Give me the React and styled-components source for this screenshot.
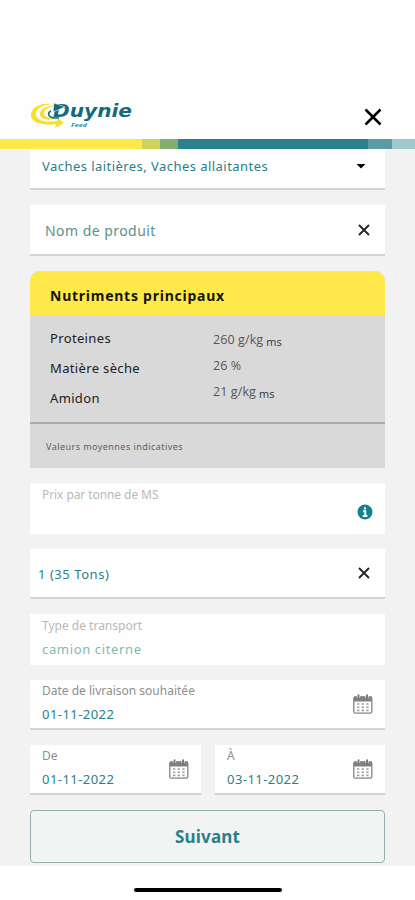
import React from "react"
import styled, {createGlobalStyle, ThemeProvider} from "styled-components"

const theme = {
  colors: {
    teal: "#2b7f8a",
    tealSoft: "#5d918f",
    tealPale: "#83b9b2",
    yellow: "#ffe94a",
    page: "#f2f2f2",
    panel: "#d9d9d9",
    line: "#d3d5d5",
    label: "#8f8f8f",
    labelPale: "#b9b9b9"
  },
  fontFamilies: {
    default: `"Noto Sans", "Open Sans", sans-serif`,
    values: `"Open Sans", sans-serif`
  }
}

const GlobalStyle = createGlobalStyle`
  * {
    box-sizing: border-box;
  }

  body {
    margin: 0;
    background: #fff;
  }
`

const Screen = styled.div`
  display: flex;
  flex-direction: column;
  width: 415px;
  height: 900px;
  overflow: hidden;
  background: #fefefe;
  font-family: ${props => props.theme.fontFamilies.default};
`

const Header = styled.header`
  display: flex;
  justify-content: space-between;
  height: 139px;
  padding: 98px 33px 0 28px;
`

const HeaderClose = styled.svg`
  width: 18px;
  height: 18px;
  margin-top: 10px;
`

const Stripes = styled.div`
  display: grid;
  grid-template-columns: 142px 18px 18px 190px 24px 1fr;
  flex: none;
  height: 10px;
`

const Stripe = styled.span`
  background: ${props => props.$color};
`

const Form = styled.main`
  display: flex;
  flex-direction: column;
  gap: 15px;
  flex: none;
  height: 717px;
  padding: 0 30px;
  background: ${props => props.theme.colors.page};
`

const FieldBox = styled.div`
  display: flex;
  justify-content: space-between;
  flex: none;
  width: 100%;
  height: ${props => props.$height || 50}px;
  padding: 0 12px 0 ${props => props.$indent || 12}px;
  background: #fefefe;
  border-bottom: ${props => (props.$line ? 2 : 0)}px solid ${props => props.theme.colors.line};
`

const FieldText = styled.div`
  padding-top: ${props => props.$top}px;
  white-space: nowrap;
`

const Label = styled.div`
  font-size: 12px;
  line-height: 16px;
  letter-spacing: ${props => props.$spacing || 0}px;
  color: ${props => (props.$pale ? props.theme.colors.labelPale : props.theme.colors.label)};
`

const Value = styled.div`
  margin-top: ${props => (props.$stacked ? 5 : 0)}px;
  font-size: ${props => props.$size || 13}px;
  line-height: 20px;
  letter-spacing: ${props => props.$spacing || 0.45}px;
  color: ${props => props.theme.colors[props.$tone || "teal"]};
`

const FieldIcon = styled.svg`
  flex: none;
  width: ${props => props.$size}px;
  height: ${props => props.$size}px;
  margin-top: ${props => props.$top}px;
  margin-right: ${props => props.$right || 0}px;
`

const Card = styled.section`
  flex: none;
  height: 197px;
  border-radius: 10px 10px 0 0;
  overflow: hidden;
  background: ${props => props.theme.colors.panel};
`

const CardTitle = styled.h2`
  height: 44px;
  margin: 0;
  padding-left: 20px;
  font-size: 14px;
  line-height: 50px;
  letter-spacing: 0.75px;
  color: #15150f;
  background: ${props => props.theme.colors.yellow};
`

const CardBody = styled.div`
  display: grid;
  grid-template-columns: 163px 1fr;
  height: 109px;
  padding-left: 20px;
  border-bottom: 2px solid #a9adad;
`

const NutrientNames = styled.div`
  padding-top: 8px;
  font-size: 13px;
  line-height: 30px;
  letter-spacing: 0.35px;
  color: #202020;
`

const NutrientValues = styled.div`
  padding-top: 12px;
  font-family: ${props => props.theme.fontFamilies.values};
  font-size: 12.5px;
  line-height: 26px;
  letter-spacing: 0.1px;
  color: #555;
`

const NutrientValue = styled.div`
  height: 26px;
`

const Unit = styled.span`
  position: relative;
  top: 2px;
  margin-left: 3px;
  font-size: 11px;
  color: #333;
`

const CardNote = styled.p`
  margin: 0;
  padding-left: 16px;
  font-size: 9px;
  line-height: 46px;
  letter-spacing: 0.45px;
  color: #606060;
`

const DateRow = styled.div`
  display: grid;
  grid-template-columns: 171px 170px;
  column-gap: 14px;
`

const NextButton = styled.button`
  flex: none;
  height: 53px;
  padding: 0;
  font-family: inherit;
  font-size: 17px;
  font-weight: 700;
  letter-spacing: 0.2px;
  color: ${props => props.theme.colors.teal};
  background: #f2f4f4;
  border: 1.5px solid #92b0b0;
  border-radius: 4px;
`

const HomeArea = styled.footer`
  display: flex;
  justify-content: center;
  padding-top: 22px;
`

const HomeIndicator = styled.div`
  width: 148px;
  height: 4px;
  border-radius: 2px;
  background: #000;
`

const Logo = () => (
  <svg width="108" height="34" viewBox="0 0 108 34">
    <path
      d="M24 6C11 4 2 11 3 18c1 7 13 10 25 8l-1 4 9-5-6-5-1 3c-10 2-20 0-21-6C7 12 13 7 24 6Z"
      fill="#f7df2b"
    />
    <path d="M27 8c-8-1-15 3-15 8 0 6 10 7 16 4-6 1-12-1-12-5 0-3 4-6 11-7Z" fill="#f7df2b" />
    <path d="M23 13c-4 2-3 6 3 7h5" fill="none" stroke="#146c79" strokeWidth="1.5" />
    <text
      x="25"
      y="19"
      textLength="79"
      lengthAdjust="spacingAndGlyphs"
      fontFamily="DejaVu Sans, sans-serif"
      fontSize="17"
      fontWeight="700"
      fontStyle="italic"
      fill="#146c79"
    >
      Duynie
    </text>
    <path d="m26 5 11 4-12 5Z" fill="#146c79" stroke="#fefefe" strokeWidth="0.6" />
    <text
      x="43"
      y="29"
      textLength="16"
      lengthAdjust="spacingAndGlyphs"
      fontFamily="Open Sans, sans-serif"
      fontSize="6"
      fontWeight="700"
      fontStyle="italic"
      fill="#3d8d98"
    >
      Feed
    </text>
  </svg>
)

const ClearIcon = ({top}) => (
  <FieldIcon $size={12} $top={top} $right={3} viewBox="0 0 12 12">
    <path d="m1 1 10 10M11 1 1 11" stroke="#222" strokeWidth="1.8" />
  </FieldIcon>
)

const CalendarIcon = () => (
  <FieldIcon $size={20} $top={14} viewBox="0 0 20 20">
    <rect x="0.8" y="3" width="18" height="16.2" rx="1.5" fill="#fff" stroke="#858585" strokeWidth="1.3" />
    <path d="M1 2.500h17.600v5H1Z" fill="#808080" />
    <path d="M5.500 0v4M14 0v4" stroke="#fefefe" strokeWidth="3.200" />
    <path d="M5.500 0.500v4M14 0.500v4" stroke="#6f6f6f" strokeWidth="1.800" />
    <path d="M4 10h12M4 13.200h12M4 16.400h12" stroke="#a2a2a2" strokeWidth="1.600" strokeDasharray="2.400 2.200" />
  </FieldIcon>
)

const DateField = ({label, value}) => (
  <FieldBox $line>
    <FieldText $top={3}>
      <Label>{label}</Label>
      <Value $stacked>{value}</Value>
    </FieldText>
    <CalendarIcon />
  </FieldBox>
)

const STRIPES = ["#ffe94a", "#cfd35d", "#82ac70", "#2b808e", "#5a9ba6", "#a0c9cf"]

const App = () => (
  <ThemeProvider theme={theme}>
    <GlobalStyle />
    <Screen>
      <Header>
        <Logo />
        <HeaderClose viewBox="0 0 18 18">
          <path d="m1.5 1.5 15 15M16.5 1.5l-15 15" stroke="#000" strokeWidth="2.5" />
        </HeaderClose>
      </Header>
      <Stripes>
        {STRIPES.map(color => (
          <Stripe key={color} $color={color} />
        ))}
      </Stripes>
      <Form>
        <FieldBox $height={41} $line>
          <FieldText $top={7}>
            <Value>Vaches laitières, Vaches allaitantes</Value>
          </FieldText>
          <FieldIcon $size={10} $top={13} $right={7} viewBox="0 0 10 10">
            <path d="M0.5 2h9L5 6.5Z" fill="#000" />
          </FieldIcon>
        </FieldBox>
        <FieldBox $height={51} $indent={15} $line>
          <FieldText $top={16}>
            <Value $size={14} $tone="tealSoft">
              Nom de produit
            </Value>
          </FieldText>
          <ClearIcon top={19} />
        </FieldBox>
        <Card>
          <CardTitle>Nutriments principaux</CardTitle>
          <CardBody>
            <NutrientNames>
              <div>Proteines</div>
              <div>Matière sèche</div>
              <div>Amidon</div>
            </NutrientNames>
            <NutrientValues>
              <NutrientValue>
                260 g/kg<Unit>ms</Unit>
              </NutrientValue>
              <NutrientValue>26 %</NutrientValue>
              <NutrientValue>
                21 g/kg<Unit>ms</Unit>
              </NutrientValue>
            </NutrientValues>
          </CardBody>
          <CardNote>Valeurs moyennes indicatives</CardNote>
        </Card>
        <FieldBox $height={51}>
          <FieldText $top={4}>
            <Label $pale $spacing={-0.08}>
              Prix par tonne de MS
            </Label>
          </FieldText>
          <FieldIcon $size={16} $top={21} viewBox="0 0 16 16">
            <circle cx="8" cy="8" r="7.5" fill="#16808c" />
            <path d="M8 3.2v2.4M6 7.2h2.3v4M5.8 12h4.6" stroke="#fff" strokeWidth="1.9" fill="none" />
          </FieldIcon>
        </FieldBox>
        <FieldBox $indent={8} $line>
          <FieldText $top={15}>
            <Value $spacing={0.55}>1 (35 Tons)</Value>
          </FieldText>
          <ClearIcon top={18} />
        </FieldBox>
        <FieldBox $height={51}>
          <FieldText $top={4}>
            <Label $pale>Type de transport</Label>
            <Value $stacked $tone="tealPale" $spacing={0.65}>
              camion citerne
            </Value>
          </FieldText>
        </FieldBox>
        <DateField label="Date de livraison souhaitée" value="01-11-2022" />
        <DateRow>
          <DateField label="De" value="01-11-2022" />
          <DateField label="À" value="03-11-2022" />
        </DateRow>
        <NextButton>Suivant</NextButton>
      </Form>
      <HomeArea>
        <HomeIndicator />
      </HomeArea>
    </Screen>
  </ThemeProvider>
)

export default App
